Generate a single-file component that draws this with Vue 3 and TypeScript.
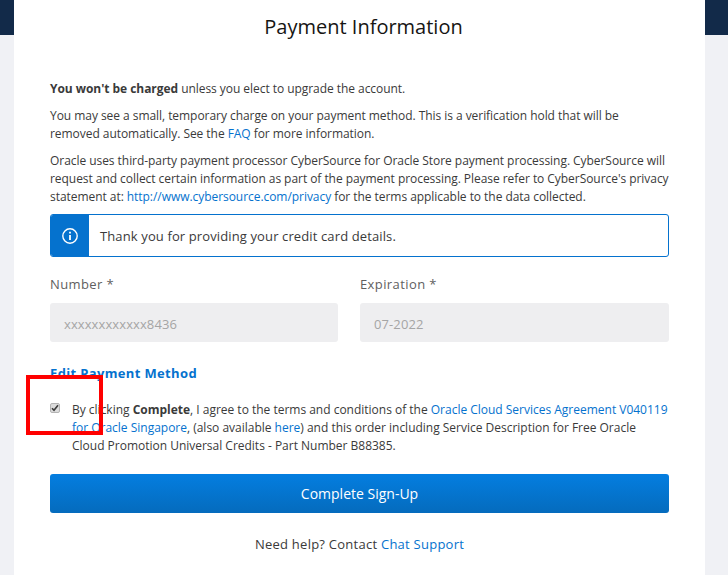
<script setup lang="ts">
const title: string = 'Payment Information'
</script>

<template>
  <div class="page">
    <main class="card">
      <h1 class="title">{{ title }}</h1>
      <p class="p first"><b>You won't be charged</b> unless you elect to upgrade the account.</p>
      <p class="p">You may see a small, temporary charge on your payment method. This is a verification hold that will be removed automatically. See the <a>FAQ</a> for more information.</p>
      <p class="p">Oracle uses third-party payment processor CyberSource for Oracle Store payment processing. CyberSource will request and collect certain information as part of the payment processing. Please refer to CyberSource's privacy statement at: <a>http://www.cybersource.com/privacy</a> for the terms applicable to the data collected.</p>
      <div class="alert">
        <div class="alert-icon">
          <svg width="18" height="18" viewBox="0 0 18 18" fill="none" stroke="#fff">
            <circle cx="9" cy="9" r="7.2" stroke-width="1.4" />
            <path d="M9 8v5" stroke-width="1.8" />
            <path d="M9 4.7v1.8" stroke-width="1.8" />
          </svg>
        </div>
        <div class="alert-text">Thank you for providing your credit card details.</div>
      </div>
      <div class="fields">
        <div>
          <label class="label">Number *</label>
          <div class="input">xxxxxxxxxxxx8436</div>
        </div>
        <div>
          <label class="label">Expiration *</label>
          <div class="input">07-2022</div>
        </div>
      </div>
      <a class="edit">Edit Payment Method</a>
      <div class="agree">
        <span class="check">
          <svg width="8" height="8" viewBox="0 0 8 8" fill="none" stroke="#3c3c3c" stroke-width="1.6">
            <path d="M1 4.2 3 6.3 7 1.2" />
          </svg>
        </span>
        <p class="agree-text">By clicking <b>Complete</b>, I agree to the terms and conditions of the <a>Oracle Cloud Services Agreement V040119 for Oracle Singapore</a>, (also available <a>here</a>) and this order including Service Description for Free Oracle<br />Cloud Promotion Universal Credits - Part Number B88385.</p>
        <div class="mark"></div>
      </div>
      <button class="btn" type="button">Complete Sign-Up</button>
      <p class="help">Need help? Contact <a>Chat Support</a></p>
    </main>
  </div>
</template>

<style>
html, body { margin: 0; padding: 0; }
</style>

<style scoped>
.page {
  height: 575px;
  overflow: hidden;
  padding: 0 23px 0 14px;
  box-sizing: border-box;
  background: linear-gradient(#122a49 35px, #f0f1f5 35px);
  font-family: "Open Sans", sans-serif;
  font-size: 12px;
  line-height: 18px;
  letter-spacing: -0.05px;
  color: #3a3a3a;
}
.card {
  height: 575px;
  box-sizing: border-box;
  background: #fff;
  padding: 0 36px;
}
.title {
  margin: 0;
  padding: 12px 0 0 8px;
  height: 80px;
  box-sizing: border-box;
  text-align: center;
  font-size: 20px;
  line-height: 30px;
  font-weight: 400;
  letter-spacing: 0;
  color: #161513;
}
.p { margin: 0 0 9px; }
a { color: #0572ce; }
b { font-weight: 700; }
.alert {
  display: flex;
  height: 43px;
  box-sizing: border-box;
  margin-top: -1px;
  border: 1px solid #0572ce;
  border-radius: 3px;
  overflow: hidden;
}
.alert-icon {
  width: 38px;
  background: #0572ce;
  display: flex;
  align-items: center;
  justify-content: center;
}
.alert-text {
  padding-left: 11px;
  line-height: 42px;
  font-size: 13px;
  letter-spacing: 0.12px;
}
.fields {
  display: grid;
  grid-template-columns: 288px 309px;
  gap: 22px;
  margin-top: 17px;
}
.label {
  display: block;
  font-size: 13px;
  line-height: 20px;
  color: #5f5f5f;
  letter-spacing: 0.4px;
  margin-bottom: 9px;
}
.input {
  height: 39px;
  line-height: 42px;
  background: #eeeef0;
  border-radius: 3px;
  padding-left: 14px;
  font-size: 13px;
  letter-spacing: 0.1px;
  color: #a5a5a5;
}
.edit {
  display: block;
  margin-top: 21px;
  font-size: 13px;
  line-height: 20px;
  font-weight: 700;
  letter-spacing: 0.35px;
}
.agree {
  position: relative;
  display: flex;
  margin-top: 18px;
}
.check {
  margin: 2px 12px 0 0;
  width: 10px;
  height: 10px;
  flex: none;
  box-sizing: border-box;
  border: 1px solid #b4b4b4;
  border-radius: 2px;
  background: #dcdcdc;
  display: flex;
  align-items: center;
  justify-content: center;
}
.agree-text { margin: 0; letter-spacing: -0.01px; }
.mark {
  position: absolute;
  left: -24px;
  top: -26px;
  width: 77px;
  height: 60px;
  box-sizing: border-box;
  border: 4px solid #f00;
}
.btn {
  display: block;
  width: 100%;
  height: 39px;
  margin-top: 19px;
  border: 0;
  border-radius: 3px;
  background: linear-gradient(#047ee0, #056bbd);
  color: #fff;
  font-family: inherit;
  font-size: 14px;
  font-weight: 500;
}
.help {
  margin: 21px 0 0;
  text-align: center;
  font-size: 13px;
  line-height: 20px;
  letter-spacing: 0.25px;
}
</style>
